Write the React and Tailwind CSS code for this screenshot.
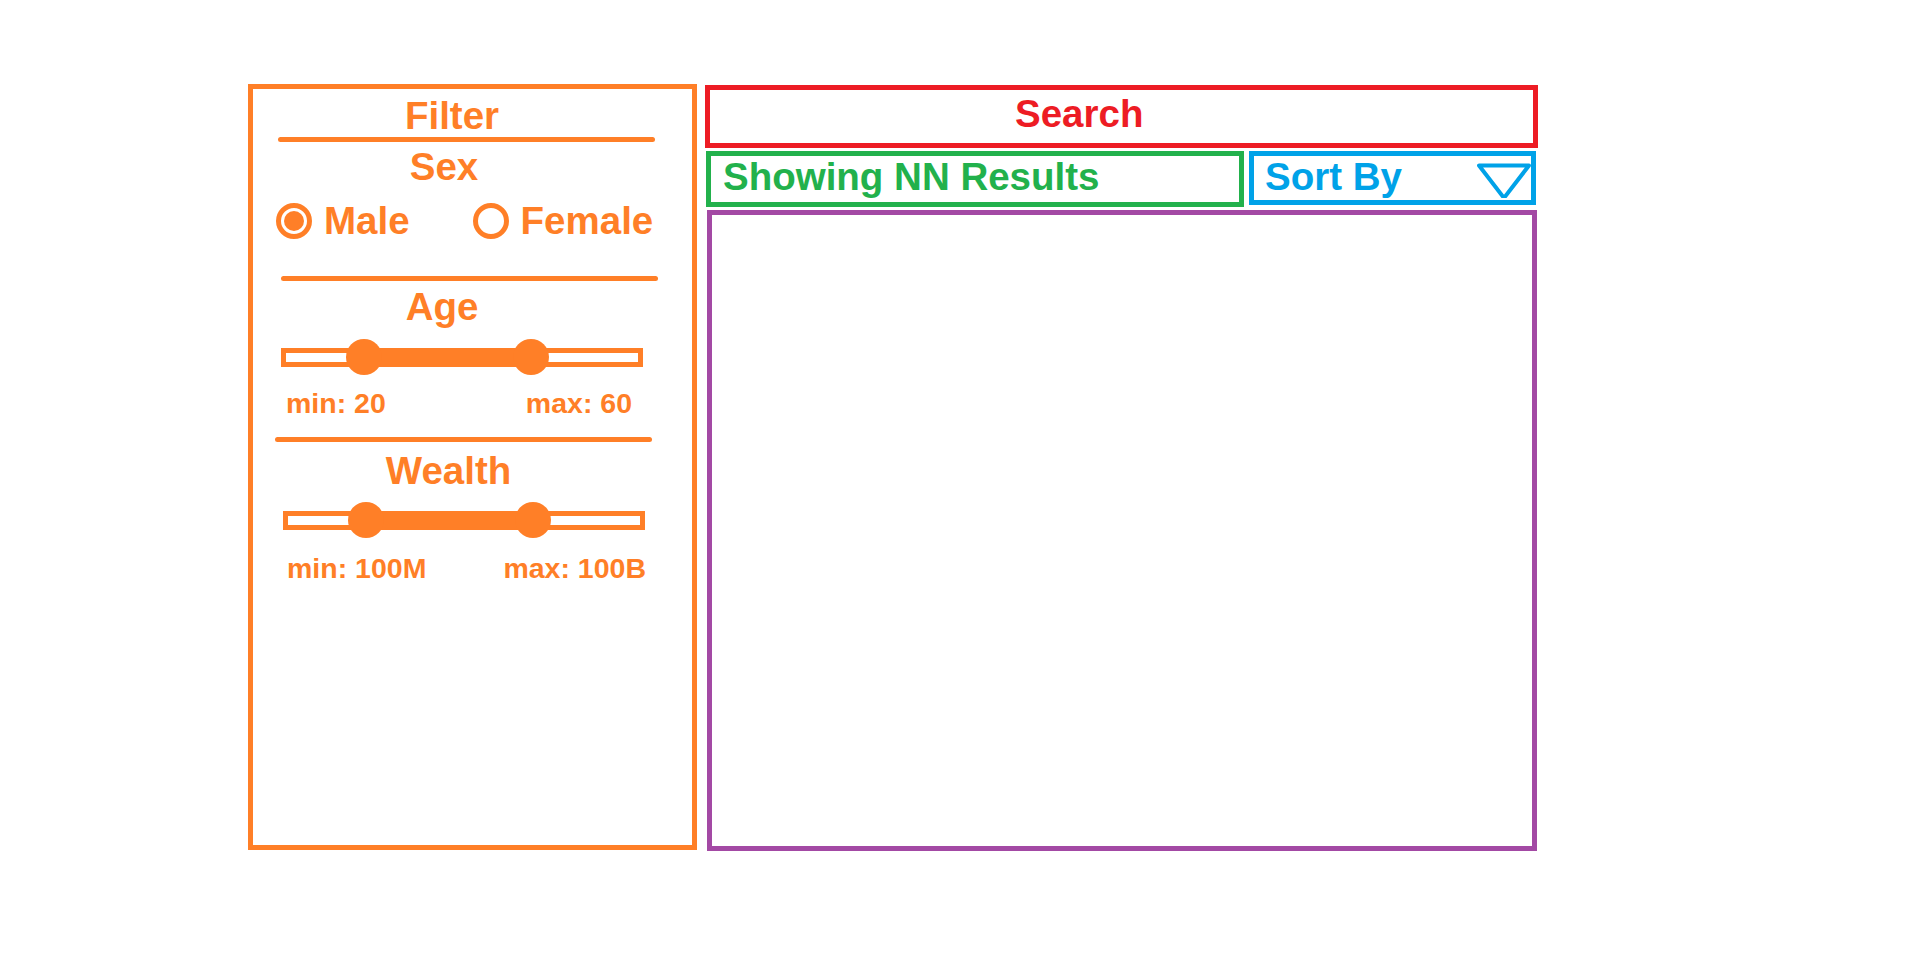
import React from 'react';

const Rule = ({ className }) => (
  <div className={`h-[5px] w-[377px] rounded-full bg-[#FF7F27] ${className}`} />
);

// two-thumb range slider drawn as a wireframe
const RangeSlider = ({ className }) => (
  <div className={`relative h-[36px] w-[362px] ${className}`}>
    <div className="absolute inset-x-0 top-[9px] h-[19px] border-[5px] border-[#FF7F27]" />
    <div className="absolute left-[83px] top-[9px] h-[19px] w-[167px] bg-[#FF7F27]" />
    <div className="absolute left-[65px] top-0 size-[36px] rounded-full bg-[#FF7F27]" />
    <div className="absolute left-[232px] top-0 size-[36px] rounded-full bg-[#FF7F27]" />
  </div>
);

const RangeLabels = ({ min, max, className }) => (
  <div className={`flex justify-between text-[28.5px] leading-[28px] ${className}`}>
    <span>min: {min}</span>
    <span>max: {max}</span>
  </div>
);

const FilterPanel = () => (
  <aside className="flex h-[766px] w-[449px] flex-col border-[5px] border-[#FF7F27] text-[#FF7F27]">
    <h2 className="mt-2 pr-[41px] text-center text-[38.5px] leading-[38px]">Filter</h2>
    <Rule className="mt-[2px] ml-[25px]" />

    {/* Sex */}
    <h3 className="mt-[6px] pr-[57px] text-center text-[38.5px] leading-[38px]">Sex</h3>
    <div className="mt-4 ml-[23px] flex h-[38px] items-center text-[38.5px] leading-[38px]">
      <span className="size-[36px] rounded-full border-[5px] border-[#FF7F27] p-[3px]">
        <span className="block size-full rounded-full bg-[#FF7F27]" />
      </span>
      <span className="ml-3">Male</span>
      <span className="ml-[63px] size-[36px] rounded-full border-[5px] border-[#FF7F27]" />
      <span className="ml-3">Female</span>
    </div>
    <Rule className="mt-9 ml-[28px]" />

    {/* Age */}
    <h3 className="mt-[7px] pr-[61px] text-center text-[38.5px] leading-[38px]">Age</h3>
    <RangeSlider className="mt-[13px] ml-[28px]" />
    <RangeLabels min="20" max="60" className="mt-[14px] ml-[33px] w-[346px]" />
    <Rule className="mt-5 ml-[22px]" />

    {/* Wealth */}
    <h3 className="mt-[10px] pr-[48px] text-center text-[38.5px] leading-[38px]">Wealth</h3>
    <RangeSlider className="mt-3 ml-[30px]" />
    <RangeLabels min="100M" max="100B" className="mt-4 ml-[34px] w-[359px]" />
  </aside>
);

const App = () => {
  return (
    <div className="h-[959px] w-full bg-white pt-[84px] pl-[248px] font-['Liberation_Sans',Arial,sans-serif] font-bold">
      <div className="flex items-start">
        <FilterPanel />

        <main className="ml-2 mt-[1px] flex w-[833px] flex-col">
          <div className="h-[63px] border-[5px] border-[#ED1C24] pt-[5px] pl-[305px] text-[38.5px] leading-[38px] text-[#ED1C24]">
            Search
          </div>

          <div className="mt-[3px] flex items-start">
            <div className="ml-[1px] h-[56px] w-[538px] border-[5px] border-[#22B14C] pt-[2px] pl-[12px] text-[38.5px] leading-[38px] text-[#22B14C]">
              Showing NN Results
            </div>
            <div className="ml-[5px] flex h-[54px] w-[287px] items-start justify-between border-[5px] border-[#00A2E8] pt-[2px] pl-[11px] text-[38.5px] leading-[38px] text-[#00A2E8]">
              <span>Sort By</span>
              <svg className="mt-[2px]" width="54" height="38" viewBox="0 0 54 38" fill="none">
                <path d="M2 5.5 L52 5.5 L27 38 Z" stroke="#00A2E8" strokeWidth="4" strokeLinejoin="round" />
              </svg>
            </div>
          </div>

          {/* results area */}
          <div className="mt-[3px] ml-[2px] h-[641px] w-[830px] border-[5px] border-[#A349A4]" />
        </main>
      </div>
    </div>
  );
};

export default App;
